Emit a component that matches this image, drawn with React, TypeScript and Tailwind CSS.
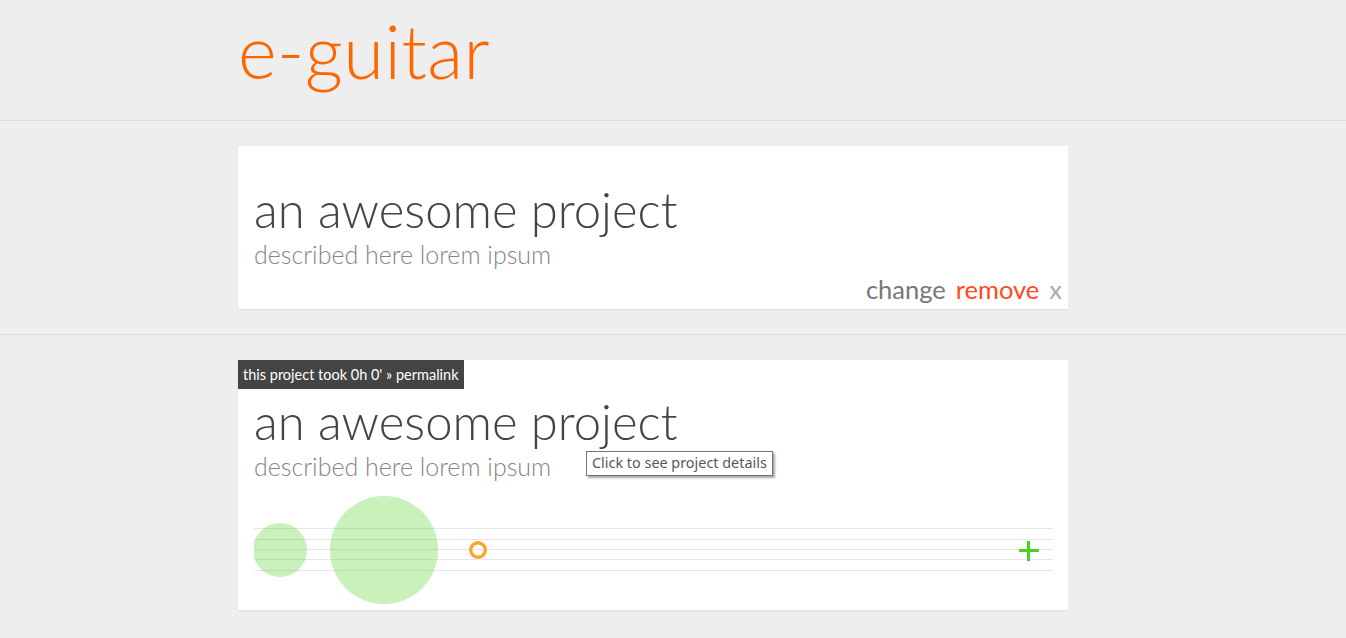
const lines = [528, 539, 549, 559, 570]

function ProjectText() {
  return (
    <>
      <h2 className="text-[49px] leading-[48px] font-light text-[#444]">an awesome project</h2>
      <p className="mt-[9px] text-[25px] leading-[24px] font-light text-[#858585]">described here lorem ipsum</p>
    </>
  )
}

function Timeline() {
  // y positions in the picture are relative to the top of the svg (496)
  return (
    <svg width="799" height="108" viewBox="0 0 799 108" className="block">
      {lines.map((y) => (
        <line key={y} x1="0" x2="799" y1={y - 496 + 0.5} y2={y - 496 + 0.5} stroke="#e6e6e6" strokeWidth="1" />
      ))}
      <circle cx="26" cy="54" r="27" fill="#4cd01f" fillOpacity="0.3" />
      <circle cx="130" cy="54" r="54" fill="#4cd01f" fillOpacity="0.3" />
      <circle cx="224" cy="54" r="7.3" fill="none" stroke="#ffa42b" strokeWidth="3.4" />
      <path d="M774.5 45v20M765 54.5h20" stroke="#4cd01f" strokeWidth="3" />
    </svg>
  )
}

export default function App() {
  return (
    <div className="min-h-screen bg-[#eee] font-['Lato_Light','Lato',sans-serif]">
      <header className="h-[121px] border-b border-[#ddd]">
        <div className="w-[870px] mx-auto pt-[15px]">
          <h1 className="text-[74px] leading-[72px] font-light text-[#ff6600] tracking-[0.5px]">e-guitar</h1>
        </div>
      </header>

      <section className="py-[25px] border-b border-[#ddd]">
        <div className="w-[870px] mx-auto">
          <div className="w-[830px] h-[163px] bg-white shadow-[0_1px_2px_rgba(0,0,0,0.07)] px-[16px] pt-[39px] flex flex-col">
            <ProjectText />
            <div className="mt-auto mb-[8px] -mr-[10px] flex justify-end gap-[10px] text-[25.5px] leading-[24px] font-['Lato',sans-serif]">
              <span className="text-[#777]">change</span>
              <span className="text-[#ff4a1c]">remove</span>
              <span className="text-[#aaa]">x</span>
            </div>
          </div>
        </div>
      </section>

      <section className="pt-[25px] pb-[25px]">
        <div className="w-[870px] mx-auto">
          <div className="relative w-[830px] bg-white shadow-[0_1px_2px_rgba(0,0,0,0.07)] pb-[6px]">
            <div className="inline-block bg-[#444] text-white text-[14.5px] leading-[29px] px-[5px] h-[29px] font-['Lato',sans-serif]">
              this project took 0h 0' » permalink
            </div>
            <div className="px-[16px] pt-[8px]">
              <ProjectText />
              <div className="mt-[18px]">
                <Timeline />
              </div>
            </div>
            <div className="absolute left-[348px] top-[91px] border border-[#767676] bg-white px-[5px] h-[25px] leading-[22px] text-[14.4px] text-[#575757] font-['Noto_Sans',sans-serif] shadow-[2px_2px_2px_rgba(0,0,0,0.35)] whitespace-nowrap">
              Click to see project details
            </div>
          </div>
        </div>
      </section>
    </div>
  )
}
